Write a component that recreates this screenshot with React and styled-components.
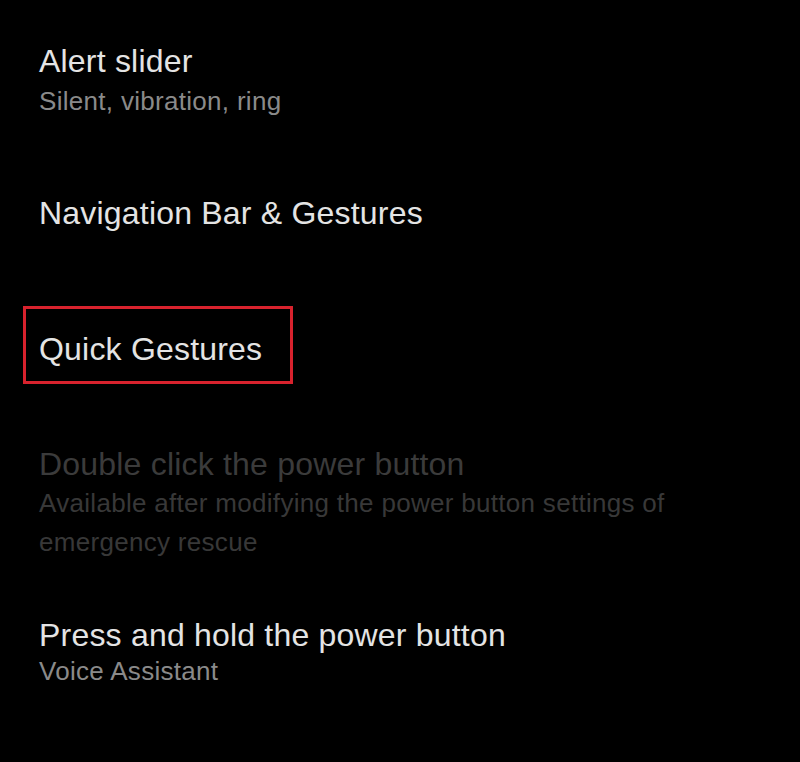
import React from "react";
import styled, { createGlobalStyle } from "styled-components";

const GlobalStyle = createGlobalStyle`
  html, body {
    margin: 0;
    padding: 0;
    background: #000;
  }
  body {
    font-family: "Liberation Sans", Arial, sans-serif;
    -webkit-font-smoothing: antialiased;
  }
`;

const Screen = styled.div`
  width: 800px;
  height: 762px;
  background: #000;
  overflow: hidden;
`;

const List = styled.div`
  display: flex;
  flex-direction: column;
  padding: 42px 0 0 39px;
`;

const Item = styled.div`
  position: relative;
  display: flex;
  flex-direction: column;
  margin-top: ${(p) => p.$gap || 0}px;

  ${(p) =>
    p.$highlight &&
    `
    &::after {
      content: "";
      position: absolute;
      left: -16px;
      top: -24px;
      width: 264px;
      height: 72px;
      border: 3px solid #d8222d;
      pointer-events: none;
    }
  `}
`;

const Title = styled.div`
  font-size: 32px;
  line-height: 38px;
  color: ${(p) => (p.$disabled ? "#3b3b3b" : "#e4e4e4")};
  letter-spacing: 0.2px;
  white-space: nowrap;
`;

const Sub = styled.div`
  font-size: 26px;
  line-height: 39px;
  margin-top: ${(p) => (p.$shift !== undefined ? p.$shift : 2)}px;
  color: ${(p) => (p.$disabled ? "#383838" : "#8a8a8a")};
  letter-spacing: 0.3px;
  max-width: 660px;
`;

export default function App() {
  return (
    <>
      <GlobalStyle />
      <Screen>
        <List>
          <Item>
            <Title>Alert slider</Title>
            <Sub>Silent, vibration, ring</Sub>
          </Item>
          <Item $gap={73}>
            <Title>Navigation Bar &amp; Gestures</Title>
          </Item>
          <Item $gap={98} $highlight>
            <Title>Quick Gestures</Title>
          </Item>
          <Item $gap={77}>
            <Title $disabled>Double click the power button</Title>
            <Sub $disabled $shift={1}>
              Available after modifying the power button settings of emergency
              rescue
            </Sub>
          </Item>
          <Item $gap={54}>
            <Title>Press and hold the power button</Title>
            <Sub $shift={-2}>Voice Assistant</Sub>
          </Item>
        </List>
      </Screen>
    </>
  );
}
